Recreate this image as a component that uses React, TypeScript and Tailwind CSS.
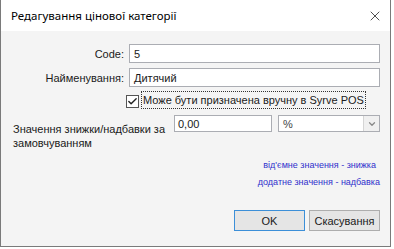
import { Check, ChevronDown, X } from "lucide-react";

export default function App() {
  return (
    <div className="h-[249px] w-[394px] bg-white font-['Liberation_Sans',sans-serif] text-[11px] leading-[14px] text-[#1a1a1a]">
      <div className="flex h-[247px] w-[391px] flex-col border-x border-b border-[#7a7a7a] bg-[#f4f4f4]">
        {/* title bar */}
        <div className="flex h-[31px] shrink-0 items-center justify-between bg-white pl-[10px] pr-[7px]">
          <span className="font-['Noto_Sans',sans-serif] text-[11.5px] text-black">
            Редагування цінової категорії
          </span>
          <X className="h-[16px] w-[16px] text-[#222]" strokeWidth={1.2} />
        </div>

        {/* form */}
        <div className="flex flex-1 flex-col pr-[10px]">
          <div className="mt-[13px] flex h-[19px] items-center">
            <span className="w-[123px] text-right">Code:</span>
            <div className="ml-[5px] flex h-[19px] flex-1 items-center border border-[#abadb3] bg-white px-[4px]">
              5
            </div>
          </div>
          <div className="mt-[5px] flex h-[19px] items-center">
            <span className="w-[123px] text-right">Найменування:</span>
            <div className="ml-[5px] flex h-[19px] flex-1 items-center border border-[#abadb3] bg-white px-[4px]">
              Дитячий
            </div>
          </div>
          <div className="mt-[4px] flex h-[18px] items-end pl-[125px]">
            <div className="mb-[1px] flex h-[13px] w-[13px] items-center justify-center border border-[#555] bg-white">
              <Check className="h-[11px] w-[11px] text-[#222]" strokeWidth={3} />
            </div>
            <span className="ml-[2px] h-[18px] whitespace-nowrap border border-dotted border-[#333] px-[1px] leading-[16px]">
              Може бути призначена вручну в Syrve POS
            </span>
          </div>

          <div className="mt-[6px] flex items-start">
            <span className="mt-[7px] w-[165px] pl-[12px] leading-[14px]">
              Значення знижки/надбавки за замовчуванням
            </span>
            <div className="ml-[8px] flex h-[17px] w-[98px] items-center border border-[#abadb3] bg-white px-[3px]">
              0,00
            </div>
            <div className="ml-[6px] flex h-[17px] flex-1 items-center border border-[#abadb3] bg-white">
              <span className="flex-1 px-[4px] text-[#444]">%</span>
              <div className="flex h-full w-[16px] items-center justify-center border-l border-[#d5d5d5] bg-[#f0f0f0]">
                <ChevronDown className="h-[10px] w-[10px] text-[#888]" strokeWidth={3} />
              </div>
            </div>
          </div>

          <div className="mt-[8px] flex flex-col items-end gap-[3px] text-[9px] leading-[14px] text-[#3030cc]">
            <span className="pr-[4px]">від'ємне значення - знижка</span>
            <span>додатне значення - надбавка</span>
          </div>

          <div className="mt-[21px] flex justify-end gap-[4px]">
            <button className="h-[21px] w-[71px] border border-[#3c8fd8] bg-[#e5e5e5] text-[11px] text-[#1a1a1a]">
              OK
            </button>
            <button className="h-[21px] w-[71px] border border-[#adadad] bg-[#e5e5e5] text-[11px] text-[#1a1a1a]">
              Скасування
            </button>
          </div>
        </div>
      </div>
    </div>
  );
}
